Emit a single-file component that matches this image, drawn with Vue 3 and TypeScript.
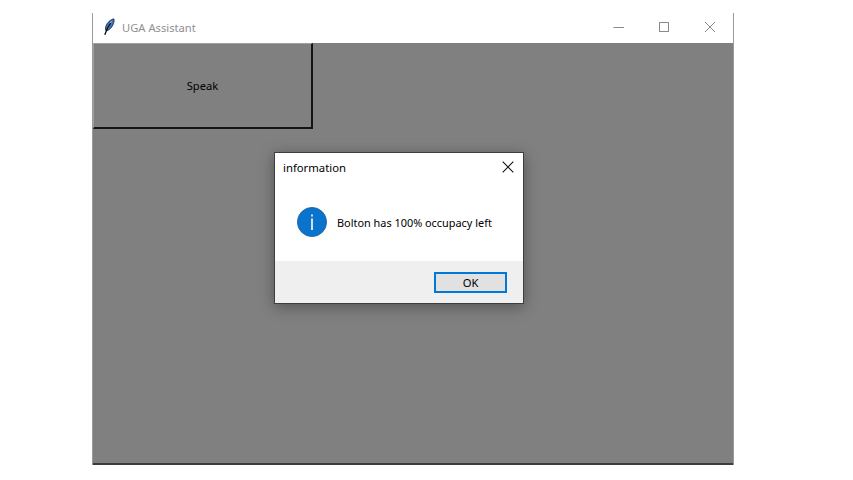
<script setup lang="ts">
const title = 'UGA Assistant'
const message = 'Bolton has 100% occupacy left'
</script>

<template>
  <div class="page">
    <div class="window">
      <header class="titlebar">
        <svg class="feather" width="12" height="18" viewBox="0 0 12 18">
          <path d="M10.8 .8C7.6 1.4 4 4.6 2.8 8.4 2.2 10.4 2.4 12 3.2 13 6.4 12.4 9.4 9 10.6 5.2 11.2 3.4 11.3 1.8 10.8 .8Z" fill="#3f74b8" stroke="#14233f" stroke-width=".8"/>
          <path d="M8.6 3.2C6.8 5.2 5.6 7.4 5 10" fill="none" stroke="#a9c9ee" stroke-width="1"/>
          <path d="M7.5 5Q4 10 1.8 16.8" fill="none" stroke="#000" stroke-width="1.3"/>
        </svg>
        <span class="title">{{ title }}</span>
        <div class="controls">
          <svg width="12" height="12" viewBox="0 0 12 12"><path d="M.5 6.5h10.5" stroke="#8a8a8a" fill="none"/></svg>
          <svg width="12" height="12" viewBox="0 0 12 12"><rect x="1.5" y="1.5" width="9" height="9" stroke="#8a8a8a" fill="none"/></svg>
          <svg class="close" width="12" height="12" viewBox="0 0 12 12"><path d="M1 1l10 10M11 1L1 11" stroke="#8a8a8a" fill="none"/></svg>
        </div>
      </header>
      <main class="content">
        <button class="speak">Speak</button>
      </main>

      <section class="dialog">
        <div class="dialog-head">
          <span>information</span>
          <svg width="12" height="12" viewBox="0 0 12 12"><path d="M.7 .7l10.6 10.6M11.3 .7L.7 11.3" stroke="#111" stroke-width="1.1" fill="none"/></svg>
        </div>
        <div class="dialog-body">
          <svg width="30" height="30" viewBox="0 0 30 30">
            <circle cx="15" cy="15" r="14.6" fill="#0a74cc" stroke="#1c5f9e" stroke-width=".8"/>
            <rect x="14.2" y="11.5" width="1.6" height="11.5" fill="#fff"/>
            <rect x="14.2" y="7.5" width="1.6" height="2" fill="#fff"/>
          </svg>
          <span class="message">{{ message }}</span>
        </div>
        <div class="dialog-foot">
          <button class="ok">OK</button>
        </div>
      </section>
    </div>
  </div>
</template>

<style>
html, body { margin: 0; background: #fff; }
</style>

<style scoped>
.page {
  width: 853px;
  height: 480px;
  position: relative;
  overflow: hidden;
  background: #fff;
  font-family: "Noto Sans", "Open Sans", sans-serif;
  font-size: 11.2px;
  color: #000;
}
.window {
  position: absolute;
  left: 92px;
  top: 13px;
  width: 642px;
  height: 452px;
  display: flex;
  flex-direction: column;
  box-sizing: border-box;
  border-left: 1px solid #9a9a9a;
  border-right: 1px solid #9a9a9a;
}
.titlebar {
  height: 30px;
  flex: none;
  display: flex;
  align-items: center;
  background: #fff;
  padding-left: 10px;
}
.feather { margin-right: 7px; margin-top: -3px; }
.title { color: #8f8f8f; font-size: 11.2px; margin-top: -2px; }
.controls {
  margin-left: auto;
  display: flex;
  align-items: center;
  gap: 33px;
  padding-right: 17px;
  margin-top: -2px;
}
.controls .close { margin-left: 1px; }
.content {
  flex: 1;
  background: #808080;
  border-bottom: 2px solid #3c3c3c;
}
.speak {
  display: block;
  box-sizing: border-box;
  width: 220px;
  height: 86px;
  padding: 0;
  background: #808080;
  border: 0;
  border-top: 1px solid #a0a0a0;
  border-left: 1px solid #a0a0a0;
  border-right: 2px solid #141414;
  border-bottom: 2px solid #141414;
  font: inherit;
  color: #000;
}
.dialog {
  position: absolute;
  left: 181px;
  top: 139px;
  width: 250px;
  height: 152px;
  box-sizing: border-box;
  display: flex;
  flex-direction: column;
  background: #fff;
  border: 1px solid #3e3e3e;
  box-shadow: 0 3px 14px rgba(0, 0, 0, 0.35);
}
.dialog-head {
  height: 30px;
  flex: none;
  box-sizing: border-box;
  display: flex;
  align-items: center;
  justify-content: space-between;
  padding: 0 9px 2px 8px;
  font-size: 11.3px;
}
.dialog-body {
  flex: 1;
  display: flex;
  align-items: center;
  gap: 10px;
  padding: 5px 0 6px 22px;
  font-size: 10.9px;
}
.message { margin-top: 2px; }
.dialog-foot {
  height: 42px;
  flex: none;
  box-sizing: border-box;
  background: #efefef;
  display: flex;
  justify-content: flex-end;
  align-items: flex-start;
  padding: 11px 16px 0 0;
}
.ok {
  width: 73px;
  height: 21px;
  box-sizing: border-box;
  padding: 0;
  background: #e1e1e1;
  border: 2px solid #0078d7;
  font: inherit;
  color: #000;
  line-height: 1;
}
</style>
